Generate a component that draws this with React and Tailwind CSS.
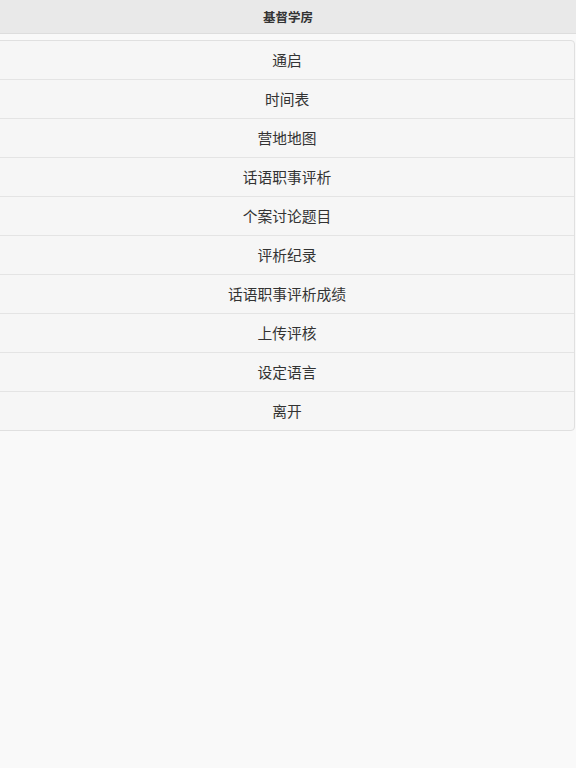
export default function App() {
  const items = ["通启", "时间表", "营地地图", "话语职事评析", "个案讨论题目", "评析纪录", "话语职事评析成绩", "上传评核", "设定语言", "离开"];
  return (
    <div className="min-h-[768px] w-[576px] bg-[#f9f9f9]" style={{ fontFamily: '"Noto Sans CJK SC", "Liberation Sans", sans-serif' }}>
      <div className="flex h-[34px] items-center justify-center border-b border-[#dddddd] bg-[#e9e9e9] pt-px text-[12.5px] font-bold text-[#333333]">
        基督学房
      </div>
      <div className="mt-[6px] mr-px -ml-px overflow-hidden rounded-r-[4px] border border-[#e0e0e0] bg-[#f6f6f6]">
        {items.map((t, i) => (
          <div
            key={t}
            className={`flex items-center justify-center text-[14.75px] text-[#333333] ${i < items.length - 1 ? "h-[39px] border-b border-[#e4e4e4]" : "h-[38px]"}`}
          >
            {t}
          </div>
        ))}
      </div>
    </div>
  );
}
